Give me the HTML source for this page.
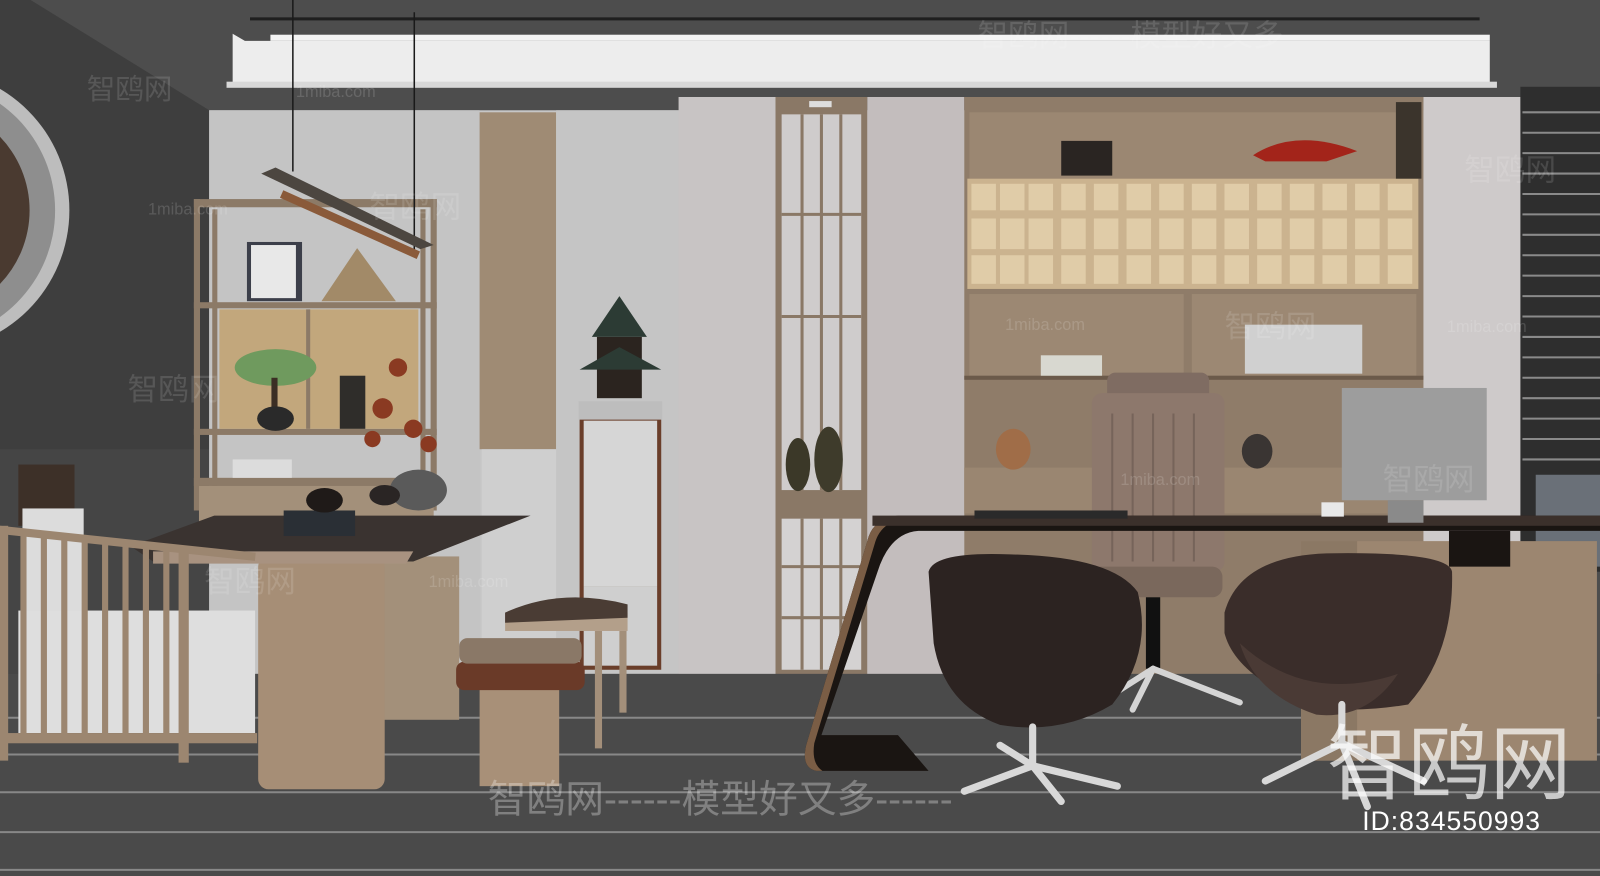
<!DOCTYPE html>
<html><head><meta charset="utf-8"><style>
html,body{margin:0;padding:0;background:#4a4a4a;overflow:hidden}
svg{display:block}
text{font-family:"Liberation Sans","Noto Sans CJK SC",sans-serif}
</style></head><body>
<svg width="1600" height="876" viewBox="0 0 1568 858" preserveAspectRatio="none" xmlns="http://www.w3.org/2000/svg">
<rect x="0" y="0" width="1568" height="858" fill="#4d4d4d"/>
<polygon points="0,0 30,0 205,108 205,660 0,660" fill="#3e3e3e"/>
<rect x="0" y="440" width="205" height="220" fill="#454545"/>
<!-- circle window -->
<circle cx="-70" cy="206" r="138" fill="#bdbdbd"/>
<circle cx="-74" cy="206" r="128" fill="#8e8e8e"/>
<circle cx="-75" cy="206" r="104" fill="#4a3a30"/>
<!-- ceiling cove -->
<rect x="245" y="17" width="1205" height="3" fill="#1f1f1f"/>
<polygon points="228,33 240,40 1460,40 1460,82 228,82" fill="#ededed"/>
<rect x="265" y="34" width="1195" height="6" fill="#f4f4f4"/>
<rect x="222" y="80" width="1245" height="6" fill="#d8d8d8"/>
<!-- back wall -->
<rect x="205" y="108" width="1290" height="552" fill="#c6c6c6"/>
<rect x="205" y="108" width="265" height="552" fill="#c4c4c4"/>
<rect x="470" y="110" width="75" height="330" fill="#9f8b74"/>
<rect x="472" y="440" width="73" height="220" fill="#cfcfcf"/>
<rect x="545" y="108" width="120" height="552" fill="#c5c5c5"/>
<rect x="665" y="95" width="95" height="567" fill="#c8c4c4"/>
<rect x="760" y="95" width="90" height="567" fill="#8a7866"/>
<rect x="766" y="112" width="78" height="368" fill="#cfcccc"/>
<g stroke="#8a7866" stroke-width="3"><line x1="786" y1="112" x2="786" y2="480"/><line x1="805" y1="112" x2="805" y2="480"/><line x1="824" y1="112" x2="824" y2="480"/><line x1="766" y1="210" x2="844" y2="210"/><line x1="766" y1="310" x2="844" y2="310"/></g>
<rect x="766" y="508" width="78" height="148" fill="#d4d2d2"/>
<g stroke="#8a7866" stroke-width="3"><line x1="786" y1="508" x2="786" y2="656"/><line x1="805" y1="508" x2="805" y2="656"/><line x1="824" y1="508" x2="824" y2="656"/><line x1="766" y1="555" x2="844" y2="555"/><line x1="766" y1="605" x2="844" y2="605"/></g>
<rect x="793" y="99" width="22" height="6" fill="#ddd"/>
<ellipse cx="782" cy="455" rx="12" ry="26" fill="#3b3828"/>
<ellipse cx="812" cy="450" rx="14" ry="32" fill="#3e3b2b"/>
<rect x="850" y="95" width="95" height="567" fill="#c3bdbd"/>
<!-- bookcase -->
<rect x="945" y="95" width="450" height="567" fill="#8f7c69"/>
<rect x="950" y="110" width="418" height="65" fill="#9b8772"/>
<rect x="948" y="175" width="442" height="108" fill="#cbb38f"/>
<g fill="#e0cca8">
<rect x="952" y="180" width="24" height="26"/><rect x="980" y="180" width="24" height="26"/><rect x="1008" y="180" width="24" height="26"/><rect x="1040" y="180" width="24" height="26"/><rect x="1072" y="180" width="24" height="26"/><rect x="1104" y="180" width="24" height="26"/><rect x="1136" y="180" width="24" height="26"/><rect x="1168" y="180" width="24" height="26"/><rect x="1200" y="180" width="24" height="26"/><rect x="1232" y="180" width="24" height="26"/><rect x="1264" y="180" width="24" height="26"/><rect x="1296" y="180" width="24" height="26"/><rect x="1328" y="180" width="24" height="26"/><rect x="1360" y="180" width="24" height="26"/>
<rect x="952" y="214" width="24" height="30"/><rect x="980" y="214" width="24" height="30"/><rect x="1008" y="214" width="24" height="30"/><rect x="1040" y="214" width="24" height="30"/><rect x="1072" y="214" width="24" height="30"/><rect x="1104" y="214" width="24" height="30"/><rect x="1136" y="214" width="24" height="30"/><rect x="1168" y="214" width="24" height="30"/><rect x="1200" y="214" width="24" height="30"/><rect x="1232" y="214" width="24" height="30"/><rect x="1264" y="214" width="24" height="30"/><rect x="1296" y="214" width="24" height="30"/><rect x="1328" y="214" width="24" height="30"/><rect x="1360" y="214" width="24" height="30"/>
<rect x="952" y="250" width="24" height="28"/><rect x="980" y="250" width="24" height="28"/><rect x="1008" y="250" width="24" height="28"/><rect x="1040" y="250" width="24" height="28"/><rect x="1072" y="250" width="24" height="28"/><rect x="1104" y="250" width="24" height="28"/><rect x="1136" y="250" width="24" height="28"/><rect x="1168" y="250" width="24" height="28"/><rect x="1200" y="250" width="24" height="28"/><rect x="1232" y="250" width="24" height="28"/><rect x="1264" y="250" width="24" height="28"/><rect x="1296" y="250" width="24" height="28"/><rect x="1328" y="250" width="24" height="28"/><rect x="1360" y="250" width="24" height="28"/>
</g>
<rect x="1368" y="100" width="25" height="75" fill="#3b342c"/>
<rect x="950" y="288" width="210" height="80" fill="#9c8873"/>
<rect x="1168" y="288" width="220" height="80" fill="#9c8873"/>
<rect x="945" y="368" width="450" height="4" fill="#6b5a4a"/>
<rect x="945" y="458" width="450" height="45" fill="#9a8671"/>
<rect x="1040" y="138" width="50" height="34" fill="#2a2522"/>
<path d="M1228 152 Q1270 125 1330 148 L1300 158 L1240 158Z" fill="#a3241a"/>
<rect x="1220" y="318" width="115" height="48" fill="#d0d0d0"/>
<rect x="1020" y="348" width="60" height="20" fill="#d8d8d0"/>
<ellipse cx="993" cy="440" rx="17" ry="20" fill="#a06d48"/>
<ellipse cx="1232" cy="442" rx="15" ry="17" fill="#3a3533"/>
<rect x="1395" y="95" width="95" height="567" fill="#cecaca"/>
<!-- window -->
<rect x="1490" y="85" width="78" height="475" fill="#2e2e2e"/>
<g stroke="#8a8a8a" stroke-width="2">
<line x1="1492" y1="110" x2="1568" y2="110"/><line x1="1492" y1="130" x2="1568" y2="130"/><line x1="1492" y1="150" x2="1568" y2="150"/><line x1="1492" y1="170" x2="1568" y2="170"/><line x1="1492" y1="190" x2="1568" y2="190"/><line x1="1492" y1="210" x2="1568" y2="210"/><line x1="1492" y1="230" x2="1568" y2="230"/><line x1="1492" y1="250" x2="1568" y2="250"/><line x1="1492" y1="270" x2="1568" y2="270"/><line x1="1492" y1="290" x2="1568" y2="290"/><line x1="1492" y1="310" x2="1568" y2="310"/><line x1="1492" y1="330" x2="1568" y2="330"/><line x1="1492" y1="350" x2="1568" y2="350"/><line x1="1492" y1="370" x2="1568" y2="370"/><line x1="1492" y1="390" x2="1568" y2="390"/><line x1="1492" y1="410" x2="1568" y2="410"/><line x1="1492" y1="430" x2="1568" y2="430"/><line x1="1492" y1="450" x2="1568" y2="450"/>
</g>
<rect x="1505" y="465" width="63" height="90" fill="#6a7078"/>
<!-- floor -->
<rect x="0" y="660" width="1568" height="198" fill="#4a4a4a"/>
<g stroke="#888" stroke-width="2">
<line x1="0" y1="703" x2="1568" y2="703"/><line x1="0" y1="739" x2="1568" y2="739"/><line x1="0" y1="776" x2="1568" y2="776"/><line x1="0" y1="815" x2="1568" y2="815"/><line x1="0" y1="852" x2="1568" y2="852"/>
</g>
<!-- left shelf -->
<g fill="#8c7a67">
<rect x="190" y="195" width="6" height="305"/><rect x="208" y="205" width="5" height="295"/><rect x="412" y="205" width="5" height="295"/><rect x="422" y="195" width="6" height="305"/>
<rect x="190" y="195" width="238" height="8"/><rect x="190" y="296" width="238" height="6"/><rect x="190" y="420" width="238" height="6"/><rect x="190" y="468" width="238" height="8"/>
</g>
<rect x="215" y="303" width="195" height="117" fill="#c2a77c"/>
<rect x="300" y="303" width="4" height="117" fill="#8c7a67"/>
<rect x="195" y="476" width="230" height="40" fill="#a3907a"/>
<rect x="242" y="237" width="54" height="58" fill="#3c3f4a"/>
<rect x="246" y="240" width="44" height="52" fill="#e8e8e8"/>
<polygon points="315,295 350,243 388,295" fill="#a28a68"/>
<ellipse cx="270" cy="360" rx="40" ry="18" fill="#6f9a5e"/>
<rect x="266" y="370" width="6" height="30" fill="#3b2e24"/>
<ellipse cx="270" cy="410" rx="18" ry="12" fill="#2a2a2a"/>
<rect x="333" y="368" width="25" height="52" fill="#2f2d2a"/>
<rect x="228" y="450" width="58" height="18" fill="#dcdcdc"/>
<line x1="287" y1="0" x2="287" y2="168" stroke="#1a1a1a" stroke-width="1.5"/>
<line x1="406" y1="12" x2="406" y2="245" stroke="#1a1a1a" stroke-width="1.5"/>
<polygon points="256,170 270,164 425,240 412,244" fill="#4c4640"/>
<line x1="276" y1="190" x2="410" y2="250" stroke="#8a5a3a" stroke-width="8"/>
<g fill="#8a3a22"><circle cx="390" cy="360" r="9"/><circle cx="375" cy="400" r="10"/><circle cx="405" cy="420" r="9"/><circle cx="420" cy="435" r="8"/><circle cx="365" cy="430" r="8"/></g>
<ellipse cx="410" cy="480" rx="28" ry="20" fill="#5a5a5a"/>
<!-- pagoda pedestal -->
<rect x="567" y="393" width="82" height="18" fill="#bdbdbd"/>
<rect x="568" y="411" width="80" height="245" fill="#6a3e2a"/>
<rect x="572" y="412" width="72" height="162" fill="#d6d6d6"/>
<rect x="572" y="574" width="72" height="78" fill="#cfcfcf"/>
<polygon points="607,290 580,330 634,330" fill="#2c3b34"/>
<rect x="585" y="330" width="44" height="60" fill="#2b241f"/>
<polygon points="568,362 607,340 648,362" fill="#2c3b34"/>
<!-- tea table -->
<rect x="365" y="545" width="85" height="160" fill="#a3907a"/>
<rect x="253" y="545" width="124" height="228" rx="10" fill="#a68e76"/>
<polygon points="128,535 210,505 520,505 405,550 150,550" fill="#3a3330"/>
<polygon points="150,540 405,540 398,552 150,552" fill="#a89280"/>
<rect x="278" y="500" width="70" height="25" fill="#2a2f35"/>
<ellipse cx="318" cy="490" rx="18" ry="12" fill="#1f1a18"/>
<ellipse cx="377" cy="485" rx="15" ry="10" fill="#2a2524"/>
<!-- armchair left -->
<rect x="18" y="455" width="55" height="60" fill="#3d3028"/>
<rect x="22" y="498" width="60" height="115" fill="#dcdcdc"/>
<rect x="18" y="598" width="232" height="120" fill="#dedede"/>
<g fill="#9c8670">
<rect x="0" y="515" width="252" height="8" transform="rotate(6 0 515)"/>
<rect x="0" y="718" width="252" height="10"/>
<rect x="0" y="515" width="8" height="230"/><rect x="20" y="525" width="6" height="200"/><rect x="40" y="525" width="6" height="200"/><rect x="60" y="525" width="6" height="200"/><rect x="80" y="525" width="6" height="200"/><rect x="100" y="530" width="6" height="195"/><rect x="120" y="532" width="6" height="193"/><rect x="140" y="535" width="6" height="190"/><rect x="160" y="538" width="6" height="187"/><rect x="175" y="540" width="10" height="207"/>
</g>
<!-- stools -->
<rect x="495" y="600" width="120" height="18" fill="#b39f8a"/>
<path d="M495 600 Q550 575 615 592 L615 605 L495 610Z" fill="#4a3c34"/>
<rect x="583" y="618" width="7" height="115" fill="#a38f7a"/>
<rect x="607" y="618" width="7" height="80" fill="#a38f7a"/>
<rect x="470" y="670" width="78" height="100" fill="#a89078"/>
<rect x="447" y="648" width="126" height="28" rx="8" fill="#6a3a28"/>
<rect x="450" y="625" width="120" height="25" rx="8" fill="#8a7867"/>
<!-- desk return -->
<rect x="1275" y="530" width="290" height="215" fill="#9c8670"/>
<rect x="1275" y="530" width="55" height="215" fill="#8b7864"/>
<!-- exec chair -->
<rect x="1085" y="365" width="100" height="40" rx="8" fill="#7f6c62"/>
<rect x="1070" y="385" width="130" height="175" rx="10" fill="#8d786c"/>
<g stroke="#76645a" stroke-width="2"><line x1="1090" y1="405" x2="1090" y2="550"/><line x1="1110" y1="405" x2="1110" y2="550"/><line x1="1130" y1="405" x2="1130" y2="550"/><line x1="1150" y1="405" x2="1150" y2="550"/><line x1="1170" y1="405" x2="1170" y2="550"/></g>
<rect x="1068" y="555" width="130" height="30" rx="10" fill="#7a685c"/>
<rect x="1123" y="585" width="14" height="70" fill="#111"/>
<g stroke="#d4d4d4" stroke-width="6" stroke-linecap="round"><line x1="1130" y1="655" x2="1075" y2="690"/><line x1="1130" y1="655" x2="1215" y2="688"/><line x1="1130" y1="655" x2="1110" y2="695"/></g>
<!-- desk -->
<path d="M855 505 L1568 505 L1568 520 L900 520 Q872 522 860 560 L805 720 L880 720 L910 755 L800 755 Q785 752 790 730 L850 530 Q855 508 880 505Z" fill="#1a1512"/>
<path d="M880 505 Q855 508 850 530 L790 730 Q785 752 800 755 L806 755 Q795 748 798 728 L858 530 Q864 512 885 508Z" fill="#7a5d45"/>
<rect x="855" y="505" width="713" height="10" fill="#3b302b"/>
<rect x="1420" y="520" width="60" height="35" fill="#1a1512"/>
<rect x="1315" y="380" width="142" height="110" fill="#9d9d9d"/>
<rect x="1360" y="490" width="35" height="22" fill="#8a8a8a"/>
<rect x="1295" y="492" width="22" height="14" fill="#e8e8e8"/>
<rect x="955" y="500" width="150" height="8" fill="#2a2a2a"/>
<!-- guest chairs -->
<path d="M910 560 Q915 540 990 543 Q1090 545 1115 580 Q1130 640 1090 690 Q1040 720 980 710 Q925 690 915 630Z" fill="#2c2321"/>
<path d="M1200 600 Q1215 545 1300 542 Q1420 540 1423 560 Q1425 640 1380 690 Q1320 700 1280 690 Q1210 660 1200 620Z" fill="#3a2d2a"/>
<path d="M1215 630 Q1280 690 1370 660 Q1340 705 1290 700 Q1230 680 1215 630Z" fill="#4a3a35"/>
<g stroke="#d8d8d8" stroke-width="7" stroke-linecap="round">
<line x1="1012" y1="712" x2="1012" y2="750"/><line x1="1012" y1="750" x2="945" y2="775"/><line x1="1012" y1="750" x2="1095" y2="770"/><line x1="1012" y1="750" x2="1040" y2="785"/><line x1="1012" y1="750" x2="980" y2="730"/>
<line x1="1315" y1="690" x2="1315" y2="728"/><line x1="1315" y1="728" x2="1240" y2="765"/><line x1="1315" y1="728" x2="1395" y2="765"/><line x1="1315" y1="728" x2="1340" y2="790"/>
</g>
<!-- watermarks -->
<g fill="#ffffff" fill-opacity="0.13" font-size="30">
<text x="958" y="45">智鸥网------模型好又多</text>
<text x="85" y="97" font-size="28">智鸥网</text>
<text x="362" y="213">智鸥网</text>
<text x="125" y="392">智鸥网</text>
<text x="1200" y="330">智鸥网</text>
<text x="1355" y="480">智鸥网</text>
<text x="1435" y="177">智鸥网</text>
<text x="200" y="580">智鸥网</text>
</g>
<g fill="#ffffff" fill-opacity="0.15" font-size="16">
<text x="290" y="95">1miba.com</text><text x="145" y="210">1miba.com</text><text x="985" y="323">1miba.com</text><text x="1418" y="325">1miba.com</text><text x="1098" y="475">1miba.com</text><text x="420" y="575">1miba.com</text>
</g>
<text x="478" y="796" font-size="38" fill="#ffffff" fill-opacity="0.3">智鸥网------模型好又多------</text>
<text x="1300" y="776" font-size="80" fill="#ffffff" fill-opacity="0.7">智鸥网</text>
<text x="1335" y="813" font-size="26" fill="#ffffff" letter-spacing="1">ID:834550993</text>
</svg>
</body></html>
